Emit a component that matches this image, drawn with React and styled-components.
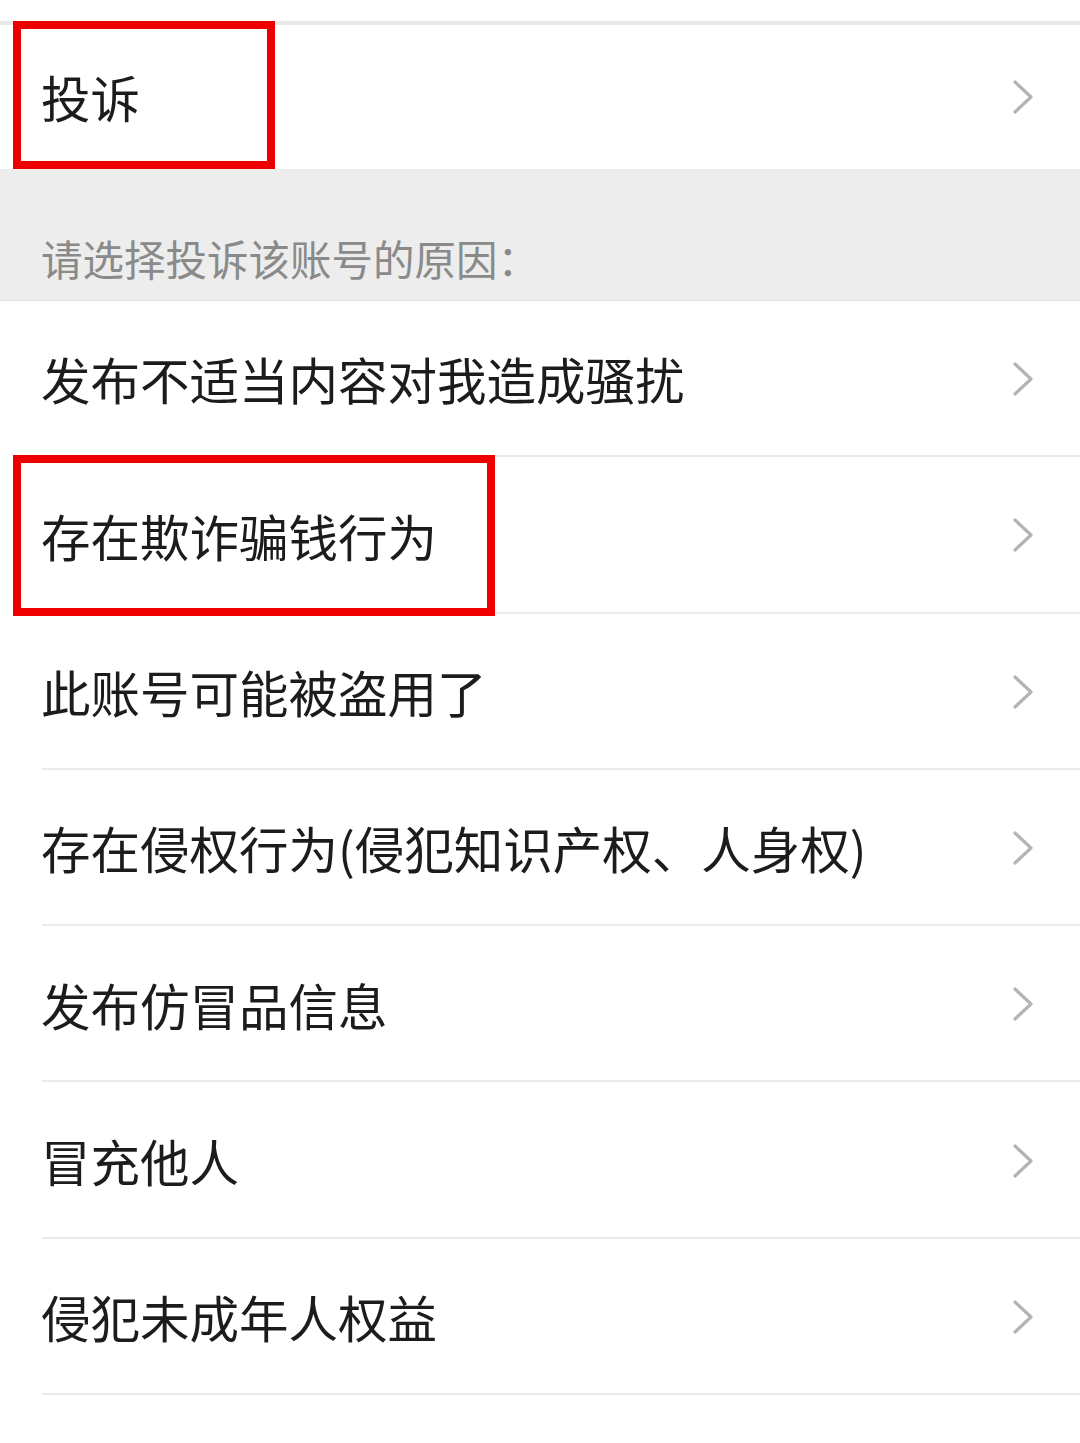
import React from "react";
import styled, { createGlobalStyle } from "styled-components";

const GlobalStyle = createGlobalStyle`
  html, body {
    margin: 0;
    padding: 0;
    background: #ffffff;
  }
  body {
    font-family: "Noto Sans CJK SC", "Noto Sans", sans-serif;
  }
`;

const Page = styled.div`
  width: 1080px;
  min-height: 1443px;
  background: #ffffff;
  padding-top: 21px;
  box-sizing: border-box;
`;

const TopCell = styled.div`
  position: relative;
  height: 148px;
  border-top: 4px solid #e8e8e8;
  box-sizing: border-box;
  display: flex;
  align-items: center;
  justify-content: space-between;
  padding: 0 46px 0 41px;
`;

const SectionHeader = styled.div`
  height: 132px;
  background: #ededed;
  border-bottom: 1px solid #e0e0e0;
  box-sizing: border-box;
  display: flex;
  align-items: flex-end;
  padding: 0 0 12px 41px;
  font-size: 41.5px;
  color: #8a8a8a;
`;

const List = styled.div`
  display: flex;
  flex-direction: column;
`;

const Row = styled.div`
  position: relative;
  height: 156.3px;
  box-sizing: border-box;
  display: flex;
  align-items: center;
  justify-content: space-between;
  padding: 0 46px 0 41px;
  &::after {
    content: "";
    position: absolute;
    left: 42px;
    right: 0;
    bottom: 0;
    height: 2px;
    background: #ebebeb;
  }
`;

const Label = styled.span`
  font-size: 49.5px;
  color: #1c1c1c;
  line-height: 1;
`;

const Highlight = styled.div`
  position: absolute;
  z-index: 2;
  left: 13px;
  top: ${(p) => p.$top}px;
  width: ${(p) => p.$w}px;
  height: ${(p) => p.$h}px;
  border: 8.5px solid #ee0000;
  box-sizing: border-box;
  pointer-events: none;
`;

const Chevron = () => (
  <svg width="22" height="36" viewBox="0 0 22 36" fill="none">
    <polyline
      points="3,3 19,18 3,33"
      stroke="#b4b4b4"
      strokeWidth="3.2"
      strokeLinecap="round"
      strokeLinejoin="round"
    />
  </svg>
);

const reasons = [
  "发布不适当内容对我造成骚扰",
  "存在欺诈骗钱行为",
  "此账号可能被盗用了",
  "存在侵权行为(侵犯知识产权、人身权)",
  "发布仿冒品信息",
  "冒充他人",
  "侵犯未成年人权益",
];

export default function App() {
  return (
    <Page>
      <GlobalStyle />
      <TopCell>
        <Label>投诉</Label>
        <Chevron />
        <Highlight $top={-4} $w={262} $h={148} />
      </TopCell>
      <SectionHeader>请选择投诉该账号的原因：</SectionHeader>
      <List>
        {reasons.map((r, i) => (
          <Row key={r}>
            <Label>{r}</Label>
            <Chevron />
            {i === 1 && <Highlight $top={-2} $w={482} $h={161} />}
          </Row>
        ))}
      </List>
    </Page>
  );
}
